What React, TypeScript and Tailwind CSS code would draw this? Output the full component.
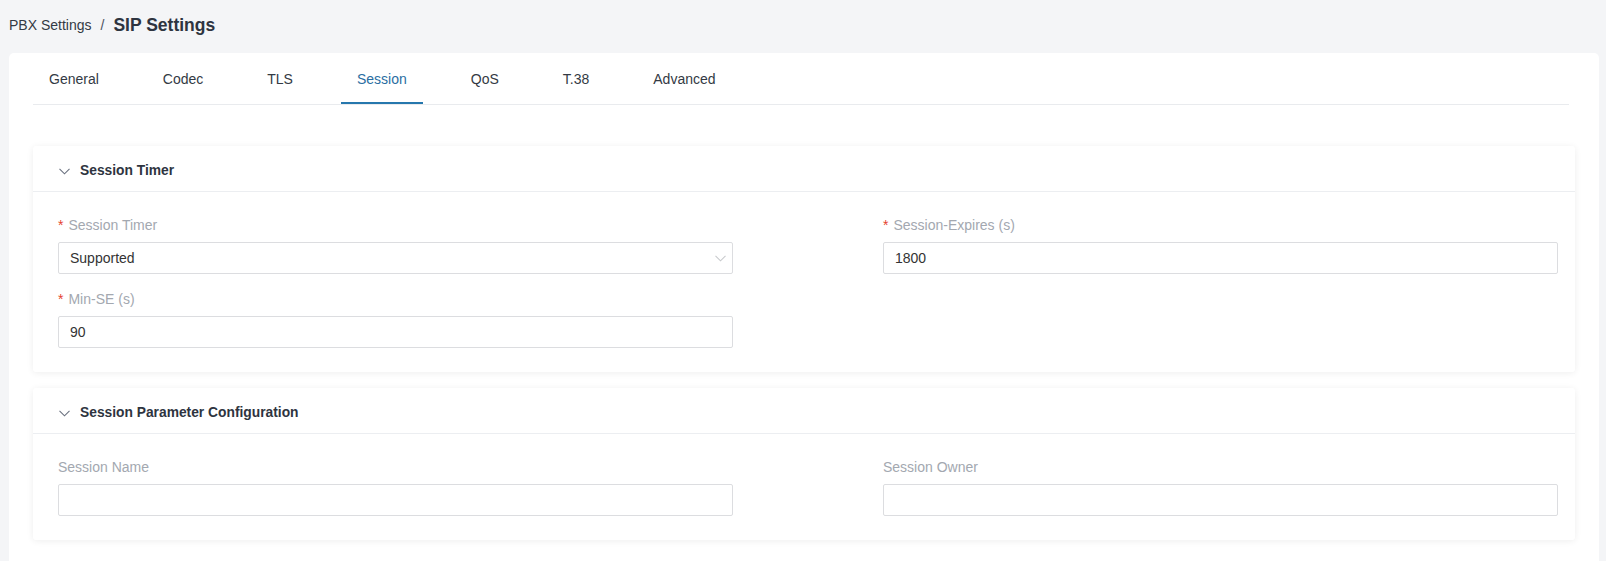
import { useState } from "react";

const tabs = ["General", "Codec", "TLS", "Session", "QoS", "T.38", "Advanced"];

function Chevron({ className }: { className?: string }) {
  return (
    <svg
      className={className}
      width="11"
      height="7"
      viewBox="0 0 11 7"
      fill="none"
      stroke="currentColor"
      strokeWidth="1.1"
    >
      <polyline points="0.5,0.8 5.5,5.8 10.5,0.8" />
    </svg>
  );
}

function Field({
  label,
  required,
  value,
  select,
}: {
  label: string;
  required?: boolean;
  value?: string;
  select?: boolean;
}) {
  return (
    <div className="flex flex-col">
      <label className="mb-[7px] flex items-center text-[14px] leading-5 text-[#a3a8b0]">
        {required && <span className="mr-[5px] text-[#e5432e]">*</span>}
        {label}
      </label>
      <div className="flex h-8 items-center justify-between rounded-[2px] border border-[#dcdde0] bg-white px-[11px] text-[14px] text-[#333]">
        <span>{value}</span>
        {select && <Chevron className="mr-[-5px] text-[#c8cacd]" />}
      </div>
    </div>
  );
}

function Card({
  title,
  children,
}: {
  title: string;
  children: React.ReactNode;
}) {
  return (
    <div className="rounded-[3px] bg-white shadow-[0_1px_7px_rgba(0,0,0,0.07)]">
      {/* header */}
      <div className="flex items-center gap-[10px] border-b border-[#eceef1] pl-[26px] pt-[15px] pb-[10px]">
        <Chevron className="text-[#6b7280]" />
        <span className="text-[13.8px] leading-5 font-bold text-[#2e3440]">
          {title}
        </span>
      </div>
      {/* body */}
      <div className="grid grid-cols-[675px_675px] gap-x-[150px] gap-y-[15px] pt-[23px] pb-6 pl-[25px]">
        {children}
      </div>
    </div>
  );
}

export default function App() {
  const [active, setActive] = useState("Session");

  return (
    <div
      className="min-h-[561px] bg-[#f4f5f7] pb-5"
      style={{ fontFamily: '"Liberation Sans", Arial, sans-serif' }}
    >
      {/* Breadcrumb */}
      <div className="flex h-[53px] items-center gap-[9px] pb-[3px] pl-[9px]">
        <span className="text-[14px] text-[#333a44]">PBX Settings</span>
        <span className="text-[14px] text-[#4b5260]">/</span>
        <span className="text-[17.5px] font-bold text-[#2e3440]">
          SIP Settings
        </span>
      </div>

      <div className="ml-[9px] mr-[7px] rounded-t-[5px] bg-white px-6 pb-6">
        {/* Tabs */}
        <div className="mr-[6px] flex gap-8 border-b border-[#e9ebee]">
          {tabs.map((t) => (
            <button
              key={t}
              onClick={() => setActive(t)}
              className={
                t === active
                  ? "border-b-2 border-[#2677ad] px-4 pt-4 pb-[13px] text-[14px] leading-5 text-[#2a6ea2]"
                  : "border-b-2 border-transparent px-4 pt-4 pb-[13px] text-[14px] leading-5 text-[#333a44]"
              }
            >
              {t}
            </button>
          ))}
        </div>

        <div className="mt-[41px] flex flex-col gap-4">
          <Card title="Session Timer">
            <Field label="Session Timer" required value="Supported" select />
            <Field label="Session-Expires (s)" required value="1800" />
            <Field label="Min-SE (s)" required value="90" />
          </Card>
          <Card title="Session Parameter Configuration">
            <Field label="Session Name" />
            <Field label="Session Owner" />
          </Card>
        </div>
      </div>
    </div>
  );
}
